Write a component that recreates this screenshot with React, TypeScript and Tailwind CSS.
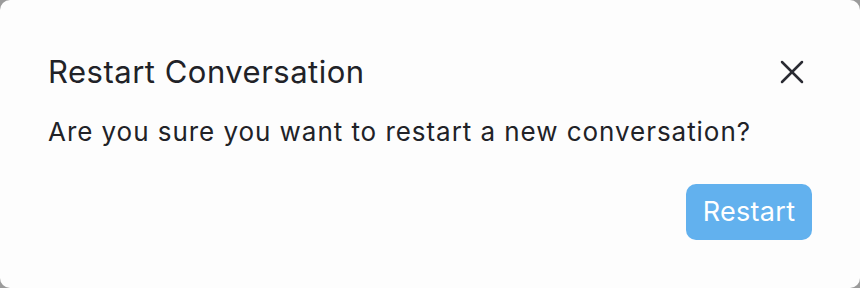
import { X } from "lucide-react";

export default function App() {
  return (
    <div className="w-[860px] h-[288px] bg-[#9b9b9b]">
      <div
        className="w-full h-full rounded-[10px] bg-[#fdfdfd] px-12 pt-[52px] flex flex-col"
        style={{ fontFamily: "Inter, 'Noto Sans', sans-serif" }}
      >
        <div className="flex items-center justify-between">
          <h2 className="text-[31px] leading-[40px] tracking-[0.5px] text-[#212227]">Restart Conversation</h2>
          <button className="w-[40px] h-[40px] flex items-center justify-center text-[#2a2b33]">
            <X className="w-[40px] h-[40px]" strokeWidth={1.5} />
          </button>
        </div>
        <p className="mt-[24px] text-[26px] leading-[32px] tracking-[0.95px] text-[#212227]">
          Are you sure you want to restart a new conversation?
        </p>
        <div className="mt-[36px] flex justify-end">
          <button className="w-[126px] h-[56px] rounded-[10px] bg-[#62b1ee] text-white text-[27px] tracking-[0.3px]">
            Restart
          </button>
        </div>
      </div>
    </div>
  );
}
